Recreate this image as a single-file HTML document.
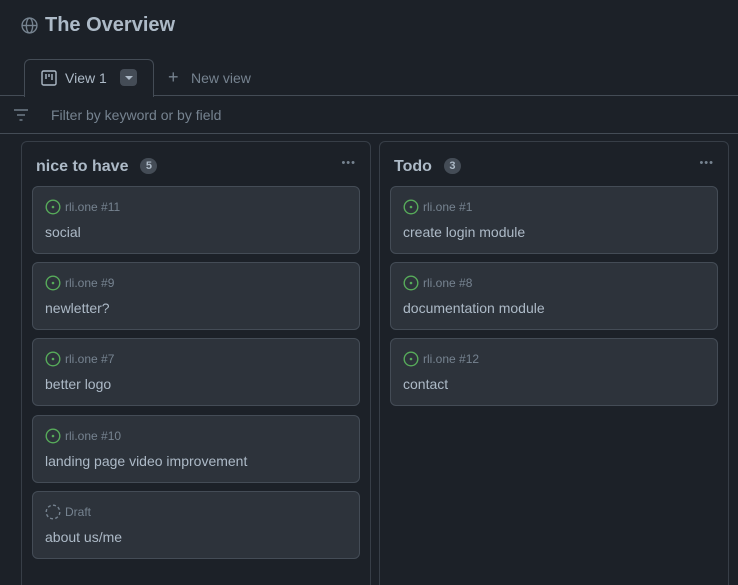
<!DOCTYPE html>
<html style="overflow:hidden;height:585px"><head><style>
*{box-sizing:border-box;margin:0;padding:0}
body{width:738px;height:585px;overflow:hidden;background:#1c2128;font-family:"Liberation Sans",sans-serif;color:#adbac7;position:relative}
.title{position:absolute;left:45px;top:14px;font-size:20px;font-weight:bold;color:#adbac7}
.globe{position:absolute;left:21px;top:17px}
.tab{position:absolute;left:24px;top:59px;width:130px;height:38px;border:1px solid #444c56;border-bottom:none;border-radius:6px 6px 0 0;background:#1c2128;z-index:2}
.tabline{position:absolute;left:0;right:0;top:95px;border-top:1px solid #444c56}
.filter{position:absolute;left:0;right:0;top:96px;height:38px;border-bottom:1px solid #444c56;background:#1c2128}
.col{position:absolute;top:141px;width:350px;height:450px;border:1px solid #373e47;border-radius:6px;background:#1c2128}
.ch{position:absolute;left:14px;top:16px;font-size:16px;font-weight:bold;color:#adbac7}
.cnt{display:inline-block;margin-left:12px;background:#444c56;color:#adbac7;font-size:11px;border-radius:10px;width:17px;height:16px;line-height:16px;text-align:center;vertical-align:2px}
.dots{position:absolute;right:14px;top:15px;color:#768390;font-size:11px;letter-spacing:1px}
.card{position:absolute;left:10px;width:328px;height:68px;background:#2d333b;border:1px solid #444c56;border-radius:6px}
.meta{position:absolute;left:12px;top:12px;font-size:12px;color:#768390;display:flex;align-items:center;gap:4px}
.txt{position:absolute;left:12px;top:37px;font-size:14px;color:#adbac7}
</style></head><body>
<svg class="globe" width="17" height="17" viewBox="0 0 16 16" fill="none" stroke="#768390" stroke-width="1.3"><circle cx="8" cy="8" r="7"/><ellipse cx="8" cy="8" rx="3" ry="7"/><line x1="1" y1="8" x2="15" y2="8"/></svg>
<div class="title">The Overview</div>
<div class="tabline"></div>
<div class="tab">
<svg style="position:absolute;left:16px;top:10px" width="16" height="16" viewBox="0 0 16 16" fill="none" stroke="#adbac7" stroke-width="1.4"><rect x="1" y="1" width="14" height="14" rx="1.5"/><line x1="5" y1="4" x2="5" y2="9"/><line x1="8" y1="4" x2="8" y2="7"/><line x1="11" y1="4" x2="11" y2="10"/></svg>
<span style="position:absolute;left:40px;top:10px;font-size:14px;color:#adbac7">View 1</span>
<div style="position:absolute;left:95px;top:9px;width:17px;height:17px;background:#444c56;border-radius:4px"><div style="position:absolute;left:5px;top:7px;border-left:4px solid transparent;border-right:4px solid transparent;border-top:4px solid #adbac7"></div></div>
</div>
<div style="position:absolute;left:168px;top:68px;font-size:18px;color:#768390;line-height:18px">+</div>
<div style="position:absolute;left:191px;top:70px;font-size:14px;color:#768390">New view</div>
<div class="filter">
<svg style="position:absolute;left:13px;top:12px" width="16" height="14" viewBox="0 0 16 14" stroke="#768390" stroke-width="1.4"><line x1="1" y1="2" x2="15" y2="2"/><line x1="4" y1="7" x2="12" y2="7"/><line x1="6.5" y1="12" x2="9.5" y2="12"/></svg>
<div style="position:absolute;left:51px;top:11px;font-size:14px;color:#768390">Filter by keyword or by field</div>
</div>

<div class="col" style="left:21px">
<div class="ch">nice to have<span class="cnt">5</span></div><div class="dots">•••</div>
<div class="card" style="top:44px"><div class="meta"><svg width="16" height="16" viewBox="0 0 16 16"><circle cx="8" cy="8" r="6.8" fill="none" stroke="#57ab5a" stroke-width="1.4"/><circle cx="8" cy="8" r="1.3" fill="#57ab5a"/></svg>rli.one #11</div><div class="txt">social</div></div>
<div class="card" style="top:120px"><div class="meta"><svg width="16" height="16" viewBox="0 0 16 16"><circle cx="8" cy="8" r="6.8" fill="none" stroke="#57ab5a" stroke-width="1.4"/><circle cx="8" cy="8" r="1.3" fill="#57ab5a"/></svg>rli.one #9</div><div class="txt">newletter?</div></div>
<div class="card" style="top:196px"><div class="meta"><svg width="16" height="16" viewBox="0 0 16 16"><circle cx="8" cy="8" r="6.8" fill="none" stroke="#57ab5a" stroke-width="1.4"/><circle cx="8" cy="8" r="1.3" fill="#57ab5a"/></svg>rli.one #7</div><div class="txt">better logo</div></div>
<div class="card" style="top:273px"><div class="meta"><svg width="16" height="16" viewBox="0 0 16 16"><circle cx="8" cy="8" r="6.8" fill="none" stroke="#57ab5a" stroke-width="1.4"/><circle cx="8" cy="8" r="1.3" fill="#57ab5a"/></svg>rli.one #10</div><div class="txt">landing page video improvement</div></div>
<div class="card" style="top:349px"><div class="meta"><svg width="16" height="16" viewBox="0 0 16 16"><circle cx="8" cy="8" r="6.8" fill="none" stroke="#768390" stroke-width="1.4" stroke-dasharray="3 2.3"/></svg>Draft</div><div class="txt">about us/me</div></div>
</div>

<div class="col" style="left:379px">
<div class="ch">Todo<span class="cnt">3</span></div><div class="dots">•••</div>
<div class="card" style="top:44px"><div class="meta"><svg width="16" height="16" viewBox="0 0 16 16"><circle cx="8" cy="8" r="6.8" fill="none" stroke="#57ab5a" stroke-width="1.4"/><circle cx="8" cy="8" r="1.3" fill="#57ab5a"/></svg>rli.one #1</div><div class="txt">create login module</div></div>
<div class="card" style="top:120px"><div class="meta"><svg width="16" height="16" viewBox="0 0 16 16"><circle cx="8" cy="8" r="6.8" fill="none" stroke="#57ab5a" stroke-width="1.4"/><circle cx="8" cy="8" r="1.3" fill="#57ab5a"/></svg>rli.one #8</div><div class="txt">documentation module</div></div>
<div class="card" style="top:196px"><div class="meta"><svg width="16" height="16" viewBox="0 0 16 16"><circle cx="8" cy="8" r="6.8" fill="none" stroke="#57ab5a" stroke-width="1.4"/><circle cx="8" cy="8" r="1.3" fill="#57ab5a"/></svg>rli.one #12</div><div class="txt">contact</div></div>
</div>
</body></html>
